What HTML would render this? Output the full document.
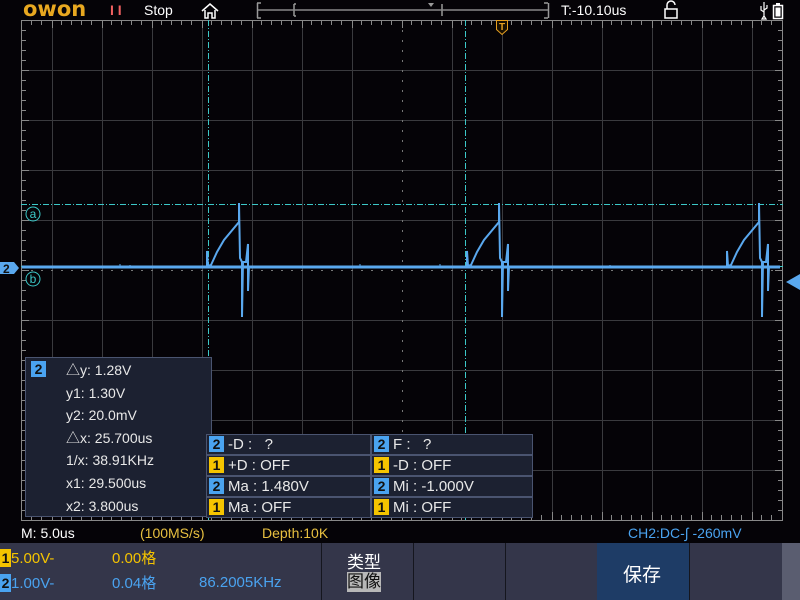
<!DOCTYPE html>
<html><head><meta charset="utf-8"><style>
*{margin:0;padding:0;box-sizing:border-box}
body{width:800px;height:600px;background:#050307;overflow:hidden;position:relative;font-family:"Liberation Sans","Noto Sans CJK SC",sans-serif;color:#fff}
.a{position:absolute;white-space:nowrap}
.b{display:inline-block;width:15px;height:16px;text-align:center;font-weight:bold;font-size:14px;line-height:16px;color:#111}
.y{background:#f5c400}.u{background:#4aa3f0}
.cell{position:absolute;height:21px;border:1px solid #4a5470;background:#1c2131;font-size:15px;line-height:19px;padding-left:2px;color:#e8e8e8}
.cell .b{margin-right:4px}
</style></head><body>
<svg class="a" style="left:0;top:0" width="800" height="600">
<defs>
<g id="burst" fill="none" stroke="#5aa8ee" stroke-width="2">
<path d="M0 267 L0 251 L1 266 L4 265 L10 252 L17 240 L32 222 L32 203 L33 258 L35 262 L35 317 L36 262 L39 262 L41 244 L41 291 L42 266"/>
</g>
</defs>
<g stroke="#3a3a3e" stroke-width="1">
<path d="M52.5 20V520M102.5 20V520M152.5 20V520M202.5 20V520M252.5 20V520M302.5 20V520M352.5 20V520M452.5 20V520M502.5 20V520M552.5 20V520M602.5 20V520M652.5 20V520M702.5 20V520M752.5 20V520"/>
<path d="M21 70.5H783M21 120.5H783M21 170.5H783M21 220.5H783M21 320.5H783M21 370.5H783M21 420.5H783M21 470.5H783"/>
</g>
<path d="M402.5 20V520M21 270.5H783" stroke="#777" stroke-width="1" stroke-dasharray="2,8"/>
<g stroke="#888" stroke-width="1">
<path d="M21.5 20V520M782.5 20V520M21 20.5H783M21 520.5H783"/>
</g>
<g stroke="#888" stroke-width="1" id="tk">
<path d="M31.5 20v5M41.5 20v5M61.5 20v5M71.5 20v5M81.5 20v5M91.5 20v5M111.5 20v5M121.5 20v5M131.5 20v5M141.5 20v5M161.5 20v5M171.5 20v5M181.5 20v5M191.5 20v5M211.5 20v5M221.5 20v5M231.5 20v5M241.5 20v5M261.5 20v5M271.5 20v5M281.5 20v5M291.5 20v5M311.5 20v5M321.5 20v5M331.5 20v5M341.5 20v5M361.5 20v5M371.5 20v5M381.5 20v5M391.5 20v5M411.5 20v5M421.5 20v5M431.5 20v5M441.5 20v5M461.5 20v5M471.5 20v5M481.5 20v5M491.5 20v5M511.5 20v5M521.5 20v5M531.5 20v5M541.5 20v5M561.5 20v5M571.5 20v5M581.5 20v5M591.5 20v5M611.5 20v5M621.5 20v5M631.5 20v5M641.5 20v5M661.5 20v5M671.5 20v5M681.5 20v5M691.5 20v5M711.5 20v5M721.5 20v5M731.5 20v5M741.5 20v5M761.5 20v5M771.5 20v5"/>
<path d="M52.5 20v8M102.5 20v8M152.5 20v8M202.5 20v8M252.5 20v8M302.5 20v8M352.5 20v8M402.5 20v8M452.5 20v8M502.5 20v8M552.5 20v8M602.5 20v8M652.5 20v8M702.5 20v8M752.5 20v8"/>
</g>
<use href="#tk" transform="translate(0,540) scale(1,-1)"/>
<g stroke="#888">
<path d="M21 30.5h5M21 40.5h5M21 50.5h5M21 60.5h5M21 80.5h5M21 90.5h5M21 100.5h5M21 110.5h5M21 130.5h5M21 140.5h5M21 150.5h5M21 160.5h5M21 180.5h5M21 190.5h5M21 200.5h5M21 210.5h5M21 230.5h5M21 240.5h5M21 250.5h5M21 260.5h5M21 280.5h5M21 290.5h5M21 300.5h5M21 310.5h5M21 330.5h5M21 340.5h5M21 350.5h5M21 360.5h5M21 380.5h5M21 390.5h5M21 400.5h5M21 410.5h5M21 430.5h5M21 440.5h5M21 450.5h5M21 460.5h5M21 480.5h5M21 490.5h5M21 500.5h5M21 510.5h5"/>
<path d="M21 70.5h8M21 120.5h8M21 170.5h8M21 220.5h8M21 270.5h8M21 320.5h8M21 370.5h8M21 420.5h8M21 470.5h8"/>
<path d="M778 30.5h5M778 40.5h5M778 50.5h5M778 60.5h5M778 80.5h5M778 90.5h5M778 100.5h5M778 110.5h5M778 130.5h5M778 140.5h5M778 150.5h5M778 160.5h5M778 180.5h5M778 190.5h5M778 200.5h5M778 210.5h5M778 230.5h5M778 240.5h5M778 250.5h5M778 260.5h5M778 280.5h5M778 290.5h5M778 300.5h5M778 310.5h5M778 330.5h5M778 340.5h5M778 350.5h5M778 360.5h5M778 380.5h5M778 390.5h5M778 400.5h5M778 410.5h5M778 430.5h5M778 440.5h5M778 450.5h5M778 460.5h5M778 480.5h5M778 490.5h5M778 500.5h5M778 510.5h5"/>
<path d="M775 70.5h8M775 120.5h8M775 170.5h8M775 220.5h8M775 270.5h8M775 320.5h8M775 370.5h8M775 420.5h8M775 470.5h8"/>
</g>
<g stroke="#3cc8c8" stroke-width="1" stroke-dasharray="6,2,1,2">
<path d="M208.5 20V520M465.5 20V520M21 204.5H783M21 266.5H783"/>
</g>
<circle cx="33" cy="214" r="7" fill="none" stroke="#3cc8c8"/>
<text x="33" y="218" fill="#3cc8c8" font-size="12" text-anchor="middle" font-family="Liberation Sans">a</text>
<circle cx="33" cy="279" r="7" fill="none" stroke="#3cc8c8"/>
<text x="33" y="283" fill="#3cc8c8" font-size="12" text-anchor="middle" font-family="Liberation Sans">b</text>
<path d="M22 267H780" stroke="#5aa8ee" stroke-width="3"/>
<path d="M120 264v3M130 265v2M360 264v3M440 264v3M610 265v2" stroke="#5aa8ee"/>
<use href="#burst" transform="translate(207,0)"/>
<use href="#burst" transform="translate(467,0)"/>
<use href="#burst" transform="translate(727,0)"/>
<path d="M0 262h14l5 6-5 6H0z" fill="#5aa8ee"/>
<text x="3" y="273" fill="#111" font-size="12" font-weight="bold" font-family="Liberation Sans">2</text>
<path d="M800 274v16l-14-8z" fill="#5aa8ee"/>
<path d="M496.5 20.5h11v9l-5.5 5-5.5-5z" fill="#1a1000" stroke="#e8a020"/>
<text x="502" y="30" fill="#e8a020" font-size="10" font-weight="bold" text-anchor="middle" font-family="Liberation Sans">T</text>
<path d="M257.5 3v15M257 3h4M257 18h4M548.5 3v15M548 3h-4M548 18h-4M294 4v12M294 4h2M294 16h2M442 4v12" stroke="#999" stroke-width="1.5" fill="none"/>
<path d="M258 10h290" stroke="#888" stroke-width="1.5"/>
<path d="M428 3h6l-3 4z" fill="#999"/>
<path d="M202 11l8-7 8 7M205 10v8h3v-5h4v5h3v-8" stroke="#fff" stroke-width="1.5" fill="none"/>
<path d="M665 9v9h12V9zM667 9V5a4 4 0 0 1 8 0" stroke="#fff" stroke-width="1.5" fill="none"/>
<path d="M764 2v14M764 16l-2 3h4zM761 6v4l3 2M767 5v3l-3 2" stroke="#fff" stroke-width="1.2" fill="none"/>
<rect x="773.5" y="5.5" width="9" height="13" fill="none" stroke="#fff" stroke-width="1.5"/><rect x="776" y="3" width="4" height="2" fill="#fff"/><rect x="775.5" y="7.5" width="5" height="9" fill="#fff"/>
</svg>
<div class="a" style="left:23px;top:-3px;font-size:21px;font-weight:bold;color:#e8a820;letter-spacing:0px;font-family:'DejaVu Sans',sans-serif">owon</div>
<div class="a" style="left:110px;top:2px;font-size:14px;color:#f06060;font-weight:bold">I I</div>
<div class="a" style="left:144px;top:2px;font-size:14px">Stop</div>
<div class="a" style="left:561px;top:2px;font-size:14px">T:-10.10us</div>
<div class="a" style="left:25px;top:357px;width:187px;height:160px;background:#1c2131;border:1px solid #4a5470;font-size:14px;color:#e8e8e8">
<span class="b u a" style="left:5px;top:3px">2</span>
<div class="a" style="left:40px;top:1px;line-height:22.6px">△y: 1.28V<br>y1: 1.30V<br>y2: 20.0mV<br>△x: 25.700us<br>1/x: 38.91KHz<br>x1: 29.500us<br>x2: 3.800us</div>
</div>
<div class="cell" style="left:206px;top:434px;width:165px"><span class="b u">2</span>-D :&nbsp;&nbsp;&nbsp;?</div>
<div class="cell" style="left:371px;top:434px;width:162px"><span class="b u">2</span>F :&nbsp;&nbsp;&nbsp;?</div>
<div class="cell" style="left:206px;top:455px;width:165px"><span class="b y">1</span>+D : OFF</div>
<div class="cell" style="left:371px;top:455px;width:162px"><span class="b y">1</span>-D : OFF</div>
<div class="cell" style="left:206px;top:476px;width:165px"><span class="b u">2</span>Ma : 1.480V</div>
<div class="cell" style="left:371px;top:476px;width:162px"><span class="b u">2</span>Mi : -1.000V</div>
<div class="cell" style="left:206px;top:497px;width:165px"><span class="b y">1</span>Ma : OFF</div>
<div class="cell" style="left:371px;top:497px;width:162px"><span class="b y">1</span>Mi : OFF</div>
<div class="a" style="left:21px;top:525px;font-size:14px">M: 5.0us</div>
<div class="a" style="left:140px;top:525px;font-size:14px;color:#e8c040">(100MS/s)</div>
<div class="a" style="left:262px;top:525px;font-size:14px;color:#e8c040">Depth:10K</div>
<div class="a" style="left:628px;top:525px;font-size:14px;color:#4aa3f0">CH2:DC-<span style="font-style:italic">∫</span> -260mV</div>
<div class="a" style="left:0;top:543px;width:800px;height:57px;background:#34364a"></div>
<div class="a" style="left:321px;top:543px;width:1px;height:57px;background:#15161e"></div>
<div class="a" style="left:413px;top:543px;width:1px;height:57px;background:#15161e"></div>
<div class="a" style="left:505px;top:543px;width:1px;height:57px;background:#15161e"></div>
<div class="a" style="left:597px;top:543px;width:92px;height:57px;background:#1e3c66"></div>
<div class="a" style="left:689px;top:543px;width:1px;height:57px;background:#15161e"></div>
<div class="a" style="left:782px;top:543px;width:18px;height:57px;background:#5a5d70"></div>
<div class="a" style="left:0;top:549px;font-size:15px;color:#f5c400"><span class="b y" style="width:11px;height:18px;line-height:18px">1</span>5.00V-</div>
<div class="a" style="left:112px;top:547px;font-size:15px;color:#f5c400">0.00格</div>
<div class="a" style="left:0;top:574px;font-size:15px;color:#4aa3f0"><span class="b u" style="width:11px;height:18px;line-height:18px">2</span>1.00V-</div>
<div class="a" style="left:112px;top:572px;font-size:15px;color:#4aa3f0">0.04格</div>
<div class="a" style="left:199px;top:574px;font-size:15px;color:#4aa3f0">86.2005KHz</div>
<div class="a" style="left:347px;top:548px;font-size:17px">类型</div>
<div class="a" style="left:347px;top:572px;font-size:17px;background:#b8b8b8;color:#111;line-height:20px">图像</div>
<div class="a" style="left:623px;top:560px;font-size:19px">保存</div>
</body></html>
